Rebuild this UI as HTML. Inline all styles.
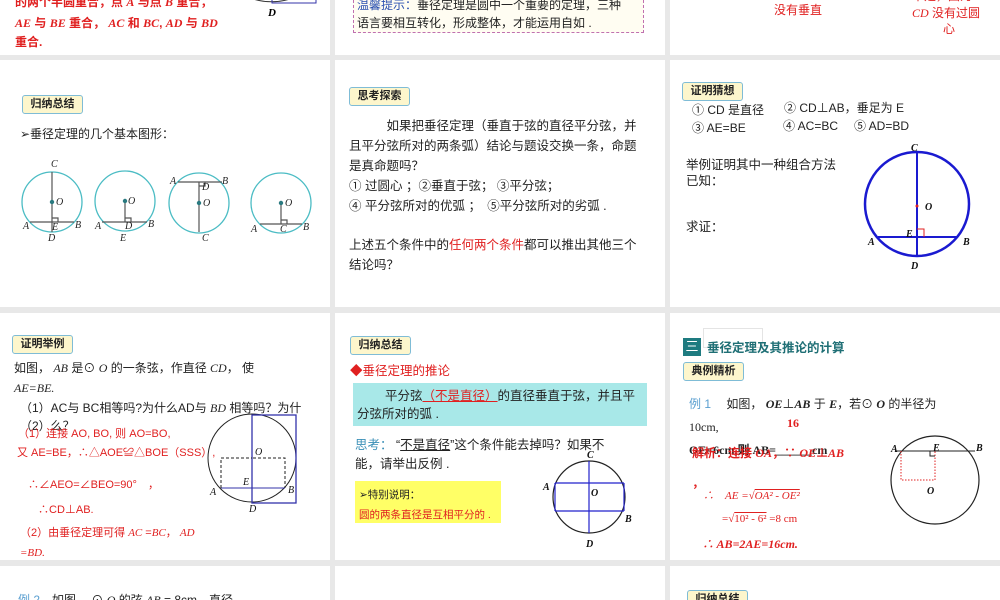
<!DOCTYPE html>
<html><head><meta charset="utf-8"><style>
*{margin:0;padding:0;box-sizing:border-box}
body{width:1000px;height:600px;background:#e8e8e8;position:relative;overflow:hidden;font-family:"Liberation Sans","Noto Sans CJK SC",sans-serif;font-size:12px;color:#222}
.s{position:absolute;background:#fff;overflow:hidden}
.t{position:absolute;white-space:nowrap;line-height:16px}
.r{color:#e02020}
.i{font-family:"Liberation Serif","Noto Serif CJK SC",serif;font-style:italic}
.lb{position:absolute;width:61px;height:19px;background:#fdf6cc;border:1.5px solid #7fbcd6;border-radius:3px;font-weight:bold;font-size:11px;text-align:center;line-height:16px;color:#222}
svg{position:absolute;left:0;top:0}
svg text{font-family:"Liberation Serif",serif;font-style:italic;font-size:10px}
</style></head><body>

<!-- Row 0 -->
<div class="s" style="left:0;top:0;width:330px;height:55px">
 <div class="t r" style="left:15px;top:-6px;font-weight:bold">的两个半圆重合，点 <span class="i">A</span> 与点 <span class="i">B</span> 重合，</div>
 <div class="t r" style="left:15px;top:15px;font-weight:bold"><span class="i">AE</span> 与 <span class="i">BE</span> 重合， <span class="i">AC</span> 和 <span class="i">BC</span>, <span class="i">AD</span> 与 <span class="i">BD</span></div>
 <div class="t r" style="left:15px;top:34px;font-weight:bold">重合.</div>
 <svg width="330" height="55"><path d="M250 -2 Q270 5 290 -1" fill="none" stroke="#333"/><rect x="272" y="-5" width="44" height="8" fill="none" stroke="#3333aa"/><text x="268" y="16" style="font-size:11px;font-weight:bold">D</text></svg>
</div>
<div class="s" style="left:335px;top:0;width:330px;height:55px">
 <div style="position:absolute;left:18px;top:-5px;width:291px;height:38px;border:1px dashed #c070b0;background:#fffdf2"></div>
 <div class="t" style="left:22px;top:-3px"><span style="color:#2a50b0">温馨提示：</span>垂径定理是圆中一个重要的定理，三种</div>
 <div class="t" style="left:22px;top:15px">语言要相互转化，形成整体，才能运用自如 .</div>
</div>
<div class="s" style="left:670px;top:0;width:330px;height:55px">
 <div class="t r" style="left:104px;top:2px">没有垂直</div>
 <div class="t r" style="left:242px;top:-12px">不是，因为</div>
 <div class="t r" style="left:242px;top:5px"><span class="i">CD</span> 没有过圆</div>
 <div class="t r" style="left:273px;top:21px">心</div>
</div>

<!-- Row 1 -->
<div class="s" style="left:0;top:60px;width:330px;height:247px">
 <div class="lb" style="left:22px;top:35px">归纳总结</div>
 <div class="t" style="left:20px;top:66px">➢垂径定理的几个基本图形：</div>
 <svg width="330" height="247">
  <g fill="none" stroke="#4bbcc4" stroke-width="1.3">
   <circle cx="52" cy="142" r="30"/><circle cx="125" cy="141" r="30"/><circle cx="199" cy="143" r="30"/><circle cx="281" cy="143" r="30"/>
  </g>
  <g stroke="#555" fill="none" stroke-width="1.2">
   <path d="M52 112V172M30 162H74M52 158H58V162"/>
   <path d="M125 141V162M102 162H147M125 158H131V162"/>
   <path d="M178 122H222M199 122V172M199 122V126H205V122"/>
   <path d="M281 143V164M260 164H302M281 160H287V164"/>
  </g>
  <g fill="#2a7a80"><circle cx="52" cy="142" r="2.2"/><circle cx="125" cy="141" r="2.2"/><circle cx="199" cy="143" r="2.2"/><circle cx="281" cy="143" r="2.2"/></g>
  <g fill="#222">
   <text x="51" y="107">C</text><text x="56" y="145">O</text><text x="23" y="169">A</text><text x="52" y="170">E</text><text x="75" y="168">B</text><text x="48" y="181">D</text>
   <text x="128" y="144">O</text><text x="95" y="169">A</text><text x="125" y="169">D</text><text x="148" y="167">B</text><text x="120" y="181">E</text>
   <text x="170" y="124">A</text><text x="222" y="124">B</text><text x="202" y="190" dy="-60">D</text><text x="203" y="146">O</text><text x="202" y="181">C</text>
   <text x="285" y="146">O</text><text x="251" y="172">A</text><text x="280" y="172">C</text><text x="303" y="170">B</text>
  </g>
 </svg>
</div>
<div class="s" style="left:335px;top:60px;width:330px;height:247px">
 <div class="lb" style="left:14px;top:27px">思考探索</div>
 <div style="position:absolute;left:14px;top:56px;font-size:12.5px;line-height:20px;width:300px">
  <div style="white-space:nowrap">　　　如果把垂径定理（垂直于弦的直径平分弦，并</div>
  <div style="white-space:nowrap">且平分弦所对的两条弧）结论与题设交换一条，命题</div>
  <div>是真命题吗？</div>
  <div style="white-space:nowrap">① 过圆心 ；②垂直于弦； ③平分弦；</div>
  <div style="white-space:nowrap">④ 平分弦所对的优弧 ；　⑤平分弦所对的劣弧 .</div>
  <div style="height:19px"></div>
  <div style="white-space:nowrap">上述五个条件中的<span class="r">任何两个条件</span>都可以推出其他三个</div>
  <div>结论吗？</div>
 </div>
</div>
<div class="s" style="left:670px;top:60px;width:330px;height:247px">
 <div class="lb" style="left:12px;top:22px">证明猜想</div>
 <div class="t" style="left:22px;top:42px">① CD 是直径</div>
 <div class="t" style="left:114px;top:40px">② CD⊥AB，垂足为 E</div>
 <div class="t" style="left:22px;top:60px">③ AE=BE</div>
 <div class="t" style="left:113px;top:58px">④ AC=BC</div>
 <div class="t" style="left:184px;top:58px">⑤ AD=BD</div>
 <div class="t" style="left:16px;top:97px;font-size:12.5px">举例证明其中一种组合方法</div>
 <div class="t" style="left:16px;top:113px;font-size:12.5px">已知：</div>
 <div class="t" style="left:16px;top:159px;font-size:12.5px">求证：</div>
 <svg width="330" height="247">
  <circle cx="247" cy="144" r="52" fill="none" stroke="#1a1ad0" stroke-width="2.5"/>
  <path d="M247 93V196M208 177H287" stroke="#1a1ad0" stroke-width="2"/>
  <path d="M247 169H254V177" stroke="#e02020" fill="none"/>
  <circle cx="247" cy="146" r="1.5" fill="#e02020"/>
  <g style="font-size:12px;font-weight:bold" fill="#111"><text x="241" y="91">C</text><text x="255" y="150">O</text><text x="236" y="177">E</text><text x="198" y="185">A</text><text x="293" y="185">B</text><text x="241" y="209">D</text></g>
 </svg>
</div>

<!-- Row 2 -->
<div class="s" style="left:0;top:313px;width:330px;height:247px">
 <div class="lb" style="left:12px;top:22px">证明举例</div>
 <div class="t" style="left:14px;top:47px">如图， <span class="i">AB</span> 是⊙ <span class="i">O</span> 的一条弦，作直径 <span class="i">CD</span>， 使</div>
 <div class="t i" style="left:14px;top:67px">AE=BE.</div>
 <div class="t" style="left:20px;top:87px">（1）AC与 BC相等吗?为什么AD与 <span class="i">BD</span> 相等吗？为什</div>
 <div class="t" style="left:20px;top:105px">（2）么？</div>
 <div class="t r" style="left:18px;top:113px;font-size:11px">（1）连接 AO, BO, 则 AO=BO,</div>
 <div class="t r" style="left:17px;top:132px;font-size:11px">又 AE=BE，∴△AOE≌△BOE（SSS）,</div>
 <div class="t r" style="left:28px;top:164px;font-size:11px">∴∠AEO=∠BEO=90°　，</div>
 <div class="t r" style="left:38px;top:189px;font-size:11px">∴CD⊥AB.</div>
 <div class="t r" style="left:20px;top:212px;font-size:11px">（2）由垂径定理可得 <span class="i">AC</span> =<span class="i">BC</span>，  <span class="i">AD</span></div>
 <div class="t r i" style="left:20px;top:232px;font-size:11px">=BD.</div>
 <svg width="330" height="247">
  <circle cx="252" cy="145" r="44" fill="none" stroke="#222"/>
  <rect x="252" y="102" width="44" height="88" fill="none" stroke="#3333aa" stroke-width="1.3"/>
  <path d="M221 175H285" stroke="#3333aa"/>
  <path d="M221 175V145H252M253 145H285V175" fill="none" stroke="#222" stroke-dasharray="3,2"/>
  <g style="font-size:8px" fill="#111"><text x="255" y="142">O</text><text x="243" y="172">E</text><text x="210" y="182">A</text><text x="288" y="180">B</text><text x="249" y="199">D</text></g>
 </svg>
</div>
<div class="s" style="left:335px;top:313px;width:330px;height:247px">
 <div class="lb" style="left:15px;top:23px">归纳总结</div>
 <div class="t r" style="left:15px;top:50px;font-size:12.5px">◆垂径定理的推论</div>
 <div style="position:absolute;left:18px;top:70px;width:294px;height:43px;background:#a8e8e8"></div>
 <div class="t" style="left:50px;top:75px;font-size:12.5px">平分弦<span class="r" style="text-decoration:underline">（不是直径）</span>的直径垂直于弦，并且平</div>
 <div class="t" style="left:22px;top:93px;font-size:12.5px">分弦所对的弧 .</div>
 <div class="t" style="left:20px;top:124px;font-size:12.5px"><span style="color:#3a8fb7">思考：</span> “<u>不是直径</u>”这个条件能去掉吗？如果不</div>
 <div class="t" style="left:20px;top:143px;font-size:12.5px">能，请举出反例 .</div>
 <div style="position:absolute;left:20px;top:168px;width:146px;height:42px;background:#ffff66"></div>
 <div class="t" style="left:24px;top:174px;font-size:10.5px">➢特别说明：</div>
 <div class="t r" style="left:24px;top:194px;font-size:10.5px">圆的两条直径是互相平分的 .</div>
 <svg width="330" height="247">
  <circle cx="254" cy="184" r="36" fill="none" stroke="#222" stroke-width="1.2"/>
  <path d="M254 148V220M220 170H289M220 198H289M220 170V198M289 170V198" stroke="#2222cc" stroke-width="1.2" fill="none"/>
  <g style="font-size:12px;font-weight:bold" fill="#111"><text x="252" y="145">C</text><text x="208" y="177">A</text><text x="256" y="183">O</text><text x="290" y="209">B</text><text x="251" y="234">D</text></g>
 </svg>
</div>
<div class="s" style="left:670px;top:313px;width:330px;height:247px">
 <div style="position:absolute;left:33px;top:15px;width:60px;height:20px;border:1px solid #e4e4e4"></div>
 <div style="position:absolute;left:13px;top:25px;width:18px;height:18px;background:#1e7b80;color:#fff;text-align:center;line-height:18px;font-size:13px">三</div>
 <div class="t" style="left:37px;top:27px;font-weight:bold;color:#1f6f75;font-size:12.5px">垂径定理及其推论的计算</div>
 <div class="lb" style="left:13px;top:49px">典例精析</div>
 <div class="t" style="left:19px;top:83px"><span style="color:#5a9fd0">例 1</span>　 如图， <b class="i">OE</b>⊥<b class="i">AB</b> 于 <b class="i">E</b>，若⊙ <b class="i">O</b> 的半径为</div>
 <div class="t" style="left:19px;top:106px;font-family:'Liberation Serif',serif">10cm,</div>
 <div class="t r" style="left:117px;top:102px;font-weight:bold;font-family:'Liberation Serif',serif">16</div>
 <div class="t" style="left:19px;top:129px;font-weight:bold;font-family:'Liberation Serif',serif">OE=6cm,则 AB=______cm</div>
 <div class="t r" style="left:22px;top:132px;font-weight:bold">解析：连接 <span class="i">OA</span>，∵ <span class="i">OE</span>⊥<span class="i">AB</span></div>
 <div class="t r" style="left:22px;top:162px;font-weight:bold">，</div>
 <div class="t r i" style="left:33px;top:175px;font-size:11px">∴　AE =√<span style="text-decoration:overline">OA² - OE²</span></div>
 <div class="t r" style="left:52px;top:198px;font-size:11px;font-family:'Liberation Serif',serif">=√<span style="text-decoration:overline">10² - 6²</span> =8 cm</div>
 <div class="t r i" style="left:32px;top:223px;font-weight:bold">∴ AB=2AE=16cm.</div>
 <svg width="330" height="247">
  <circle cx="265" cy="167" r="44" fill="none" stroke="#222" stroke-width="1.2"/>
  <path d="M225 138H305" stroke="#222"/>
  <path d="M231 138V167H265V138" fill="none" stroke="#e02020" stroke-dasharray="1.5,1.5"/>
  <path d="M260 138V143H265" fill="none" stroke="#222"/>
  <g style="font-size:13px;font-weight:bold" fill="#111"><text x="221" y="139">A</text><text x="263" y="138">E</text><text x="306" y="138">B</text><text x="257" y="181">O</text></g>
 </svg>
</div>

<!-- Row 3 -->
<div class="s" style="left:0;top:566px;width:330px;height:34px">
 <div class="t" style="left:18px;top:26px"><span style="color:#5a9fd0">例 2</span>　如图， ⊙ <span class="i">O</span> 的弦 <span class="i">AB</span> = 8cm，直径</div>
</div>
<div class="s" style="left:335px;top:566px;width:330px;height:34px"></div>
<div class="s" style="left:670px;top:566px;width:330px;height:34px">
 <div class="lb" style="left:17px;top:24px">归纳总结</div>
</div>
</body></html>
